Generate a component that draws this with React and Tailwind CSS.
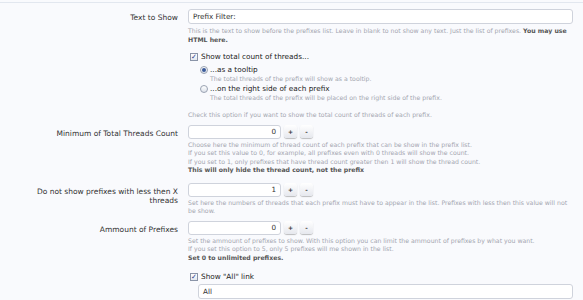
import React from 'react';

const font = { fontFamily: '"DejaVu Sans", Verdana, sans-serif' };

function Label({ children }) {
  return (
    <div className="w-[180px] shrink-0 pl-[24px] pr-[2px] text-right text-[7.5px] leading-[9px] text-[#333] pt-[4px]">
      {children}
    </div>
  );
}

function Desc({ children, className = '' }) {
  return <div className={`text-[6.2px] leading-[8.5px] text-[#a4a6b0] ${className}`}>{children}</div>;
}

function Spin({ value }) {
  return (
    <div className="flex items-center gap-[3px]">
      <div className="w-[93px] h-[14px] rounded-[3px] border border-[#cfd3dc] bg-white text-right pr-[4px] text-[7.2px] leading-[12px] text-[#333]">
        {value}
      </div>
      <button className="w-[13px] h-[13px] rounded-[3px] bg-gradient-to-b from-white to-[#e6e8ee] shadow-[0_1px_1px_rgba(0,0,0,0.25)] text-[6px] leading-[13px] text-[#333] font-bold">+</button>
      <button className="w-[13px] h-[13px] rounded-[3px] bg-gradient-to-b from-white to-[#e6e8ee] shadow-[0_1px_1px_rgba(0,0,0,0.25)] text-[6px] leading-[13px] text-[#333] font-bold">-</button>
    </div>
  );
}

function Check() {
  return (
    <span className="inline-flex w-[8px] h-[8px] border border-[#8a94a8] bg-gradient-to-b from-white to-[#e4e8f0] items-center justify-center text-[#2a3a8a] text-[7px] leading-none">✓</span>
  );
}

function Radio({ on }) {
  return (
    <span className="inline-flex w-[8px] h-[8px] rounded-full border border-[#9aa2b2] bg-gradient-to-b from-white to-[#dde2ea] items-center justify-center">
      {on && <span className="w-[4px] h-[4px] rounded-full bg-[#3a5a9a]" />}
    </span>
  );
}

export default function App() {
  return (
    <div style={font} className="w-[583px] h-[300px] overflow-hidden bg-[#f9fafd]">
      <div className="h-[3px] border-b border-[#e2e7ef]" />
      <div className="pt-[6px]">
        <div className="flex">
          <Label>Text to Show</Label>
          <div className="flex-1 pl-[8px] pr-[10px]">
            <div className="h-[15px] rounded-[3px] border border-[#cfd3dc] bg-white pl-[4px] text-[7.2px] leading-[13px] text-[#333]">Prefix Filter:</div>
            <Desc className="mt-[2px] leading-[9px]">
              This is the text to show before the prefixes list. Leave in blank to not show any text. Just the list of prefixes. <b className="text-[#555]">You may use HTML here.</b>
            </Desc>
          </div>
        </div>

        <div className="flex mt-[8px]">
          <div className="w-[180px] shrink-0" />
          <div className="flex-1 pl-[10px] pr-[10px]">
            <div className="flex items-center gap-[3px] text-[7.3px] leading-[10px] text-[#222]"><Check />Show total count of threads...</div>
            <div className="pl-[10px] mt-[3px]">
              <div className="flex items-center gap-[2px] text-[7.3px] leading-[10px] text-[#222]"><Radio on />...as a tooltip</div>
              <Desc className="pl-[10px]">The total threads of the prefix will show as a tooltip.</Desc>
              <div className="flex items-center gap-[2px] text-[7.3px] leading-[10px] text-[#222]"><Radio />...on the right side of each prefix</div>
              <Desc className="pl-[10px]">The total threads of the prefix will be placed on the right side of the prefix.</Desc>
            </div>
            <Desc className="mt-[9px] -ml-[2px]">Check this option if you want to show the total count of threads of each prefix.</Desc>
          </div>
        </div>

        <div className="flex mt-[5px]">
          <Label>Minimum of Total Threads Count</Label>
          <div className="flex-1 pl-[8px] pr-[10px]">
            <Spin value="0" />
            <Desc className="mt-[2px]">
              Choose here the minimum of thread count of each prefix that can be show in the prefix list.<br />
              If you set this value to 0, for example, all prefixes even with 0 threads will show the count.<br />
              If you set to 1, only prefixes that have thread count greater then 1 will show the thread count.<br />
              <b className="text-[#555]">This will only hide the thread count, not the prefix</b>
            </Desc>
          </div>
        </div>

        <div className="flex mt-[8px]">
          <Label>Do not show prefixes with less then X threads</Label>
          <div className="flex-1 pl-[8px] pr-[10px]">
            <Spin value="1" />
            <Desc className="mt-[2px]">
              Set here the numbers of threads that each prefix must have to appear in the list. Prefixes with less then this value will not be show.
            </Desc>
          </div>
        </div>

        <div className="flex mt-[5px]">
          <Label>Ammount of Prefixes</Label>
          <div className="flex-1 pl-[8px] pr-[10px]">
            <Spin value="0" />
            <Desc className="mt-[2px]">
              Set the ammount of prefixes to show. With this option you can limit the ammount of prefixes by what you want.<br />
              If you set this option to 5, only 5 prefixes will me shown in the list.<br />
              <b className="text-[#555]">Set 0 to unlimited prefixes.</b>
            </Desc>
          </div>
        </div>

        <div className="flex mt-[10px]">
          <div className="w-[180px] shrink-0" />
          <div className="flex-1 pl-[10px] pr-[10px]">
            <div className="flex items-center gap-[3px] text-[7.3px] leading-[10px] text-[#222]"><Check />Show "All" link</div>
            <div className="ml-[8px] mt-[2px] h-[15px] rounded-[3px] border border-[#cfd3dc] bg-white pl-[4px] text-[7.2px] leading-[13px] text-[#333]">All</div>
          </div>
        </div>
      </div>
    </div>
  );
}
